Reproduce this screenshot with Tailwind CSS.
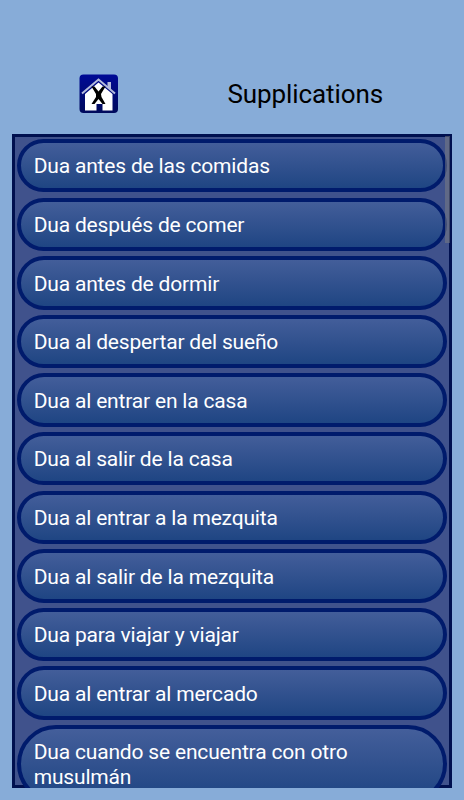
<!DOCTYPE html>
<html lang="es">

<head>
    <meta charset="UTF-8">
    <meta name="viewport" content="width=device-width, initial-scale=1.0">
    <title>Supplications</title>
    <script src="https://cdn.jsdelivr.net/npm/@tailwindcss/browser@4"></script>
</head>

<body class="bg-[#87acd8] h-screen overflow-hidden font-['Roboto',sans-serif]">
    <div class="h-full flex flex-col px-3 pb-3">
        <header class="h-[134px] shrink-0 flex items-end pb-[20px]">
            <a href="#" class="ml-[67px] block w-10 h-10">
                <svg viewBox="0 0 40 40" class="w-10 h-10">
                    <defs>
                        <linearGradient id="tile" x1="0" y1="0" x2="0" y2="1">
                            <stop offset="0" stop-color="#000a96" />
                            <stop offset="1" stop-color="#000a5c" />
                        </linearGradient>
                    </defs>
                    <rect x="0.5" y="0.5" width="38.5" height="38.5" rx="4" fill="url(#tile)" />
                    <path d="M6 20 L19.5 8.5 L33.5 20 V36.5 H23.5 V30 H17.5 V36.5 H6 Z" fill="#ffffff" />
                    <path d="M28.5 8 h3.5 v8 l-3.5 -3.5 Z" fill="#b4bbdc" />
                    <path d="M3 19.5 L19.5 5.5 L36 19.5" fill="none" stroke="#b4bbdc" stroke-width="2" />
                    <path d="M12.5 12.5 H15.5 L19.5 17.5 L23.5 12.5 H26.5 L22 20 L22.5 23 L26.5 30 H23.5 L19.5 25 L15.5 30 H12.5 L17 23 L17 20 Z" fill="#000" />
                </svg>
            </a>
            <h1 class="ml-[108.5px] mb-[3px] text-[26px] leading-[34px] tracking-[-0.1px] text-black whitespace-nowrap">Supplications</h1>
        </header>

        <main class="relative flex-1 min-h-0 overflow-hidden bg-[#40528c] shadow-[inset_0_0_0_3px_#00104f] p-[5px]">
            <ul id="list" class="flex flex-col gap-[5.33px]"></ul>
            <div class="absolute top-[2px] right-[2px] w-[5px] h-[107px] bg-[#808080]/50"></div>
        </main>
    </div>

    <script>
        const duas = [
            "Dua antes de las comidas",
            "Dua después de comer",
            "Dua antes de dormir",
            "Dua al despertar del sueño",
            "Dua al entrar en la casa",
            "Dua al salir de la casa",
            "Dua al entrar a la mezquita",
            "Dua al salir de la mezquita",
            "Dua para viajar y viajar",
            "Dua al entrar al mercado",
            "Dua cuando se encuentra con otro musulmán"
        ];
        const list = document.querySelector("#list");

        duas.forEach((dua) => {
            const li = document.createElement("li");
            li.className = "shrink-0 rounded-[40px] border-4 border-[#001b6c] bg-linear-to-b from-[#46609c] to-[#1b4381] bg-origin-border pl-[12.7px] pr-[60px] pt-[11.4px] pb-[9.2px] text-[21px] leading-[24.7px] tracking-[-0.18px] text-white";
            li.textContent = dua;
            list.appendChild(li);
        });
    </script>
</body>

</html>
